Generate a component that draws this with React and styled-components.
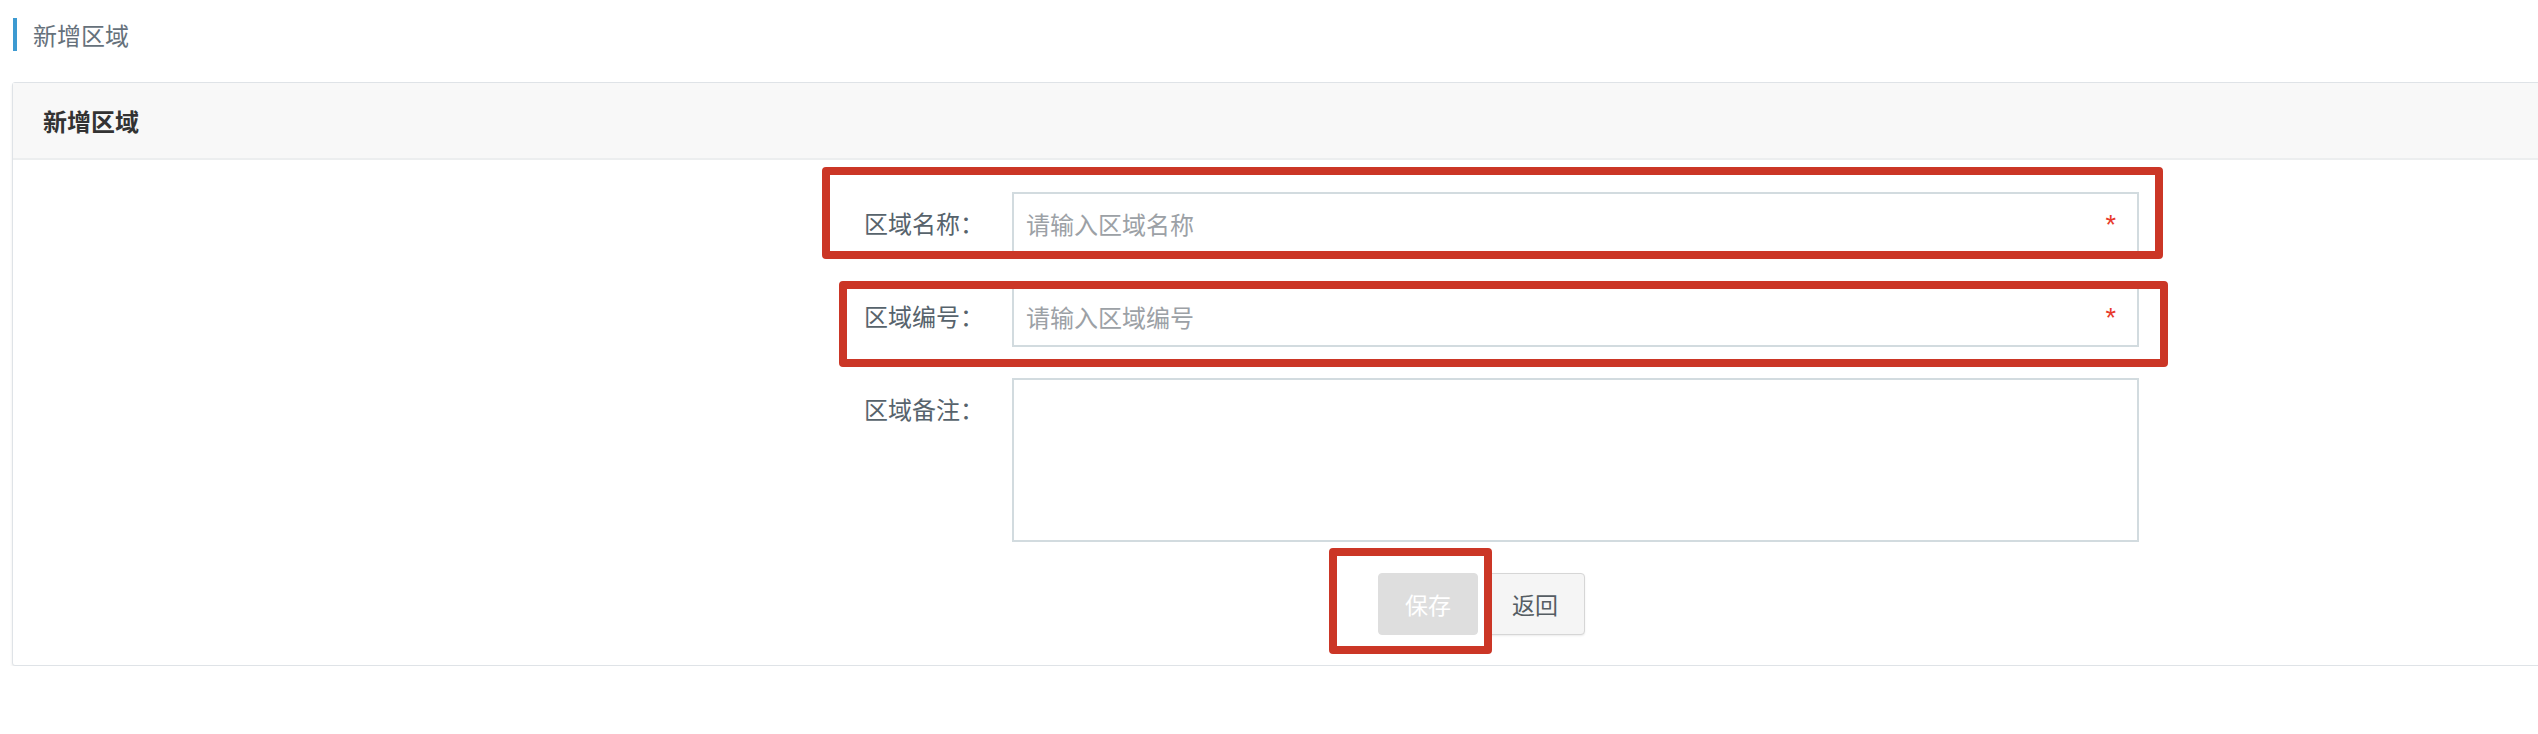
import React from 'react'
import styled, { createGlobalStyle } from 'styled-components'

const GlobalStyle = createGlobalStyle`
    html, body {
        margin: 0;
        padding: 0;
        background: #fff;
        overflow: hidden;
        font-family: "Noto Sans CJK SC", "Noto Sans", sans-serif;
    }
`

const Page = styled.div`
    padding: 18px 0 0 12px;
`

const Crumb = styled.div`
    display: flex;
    align-items: center;
    height: 33px;
    margin-left: 1px;
    border-left: 4px solid #3d9ad1;
    padding-left: 16px;
    font-size: 24px;
    color: #66717b;
`

const Panel = styled.div`
    margin-top: 31px;
    width: 2700px;
    background: #fff;
    border: 1px solid #dfe3e7;
    border-radius: 3px;
    box-shadow: 0 2px 3px rgba(0, 0, 0, 0.08);
`

const PanelHead = styled.div`
    height: 75px;
    display: flex;
    align-items: center;
    padding-left: 30px;
    background: #f8f8f8;
    border-bottom: 2px solid #eceeef;
    font-size: 24px;
    font-weight: bold;
    color: #333;
`

const Form = styled.div`
    padding: 32px 0 30px;
    display: flex;
    flex-direction: column;
    gap: 31px;
`

const Row = styled.div`
    position: relative;
    display: grid;
    grid-template-columns: 999px 1127px;
    align-items: start;
`

const Label = styled.div`
    line-height: 62px;
    text-align: right;
    padding-right: 28px;
    font-size: 24px;
    color: #57636c;
`

const Field = styled.div`
    position: relative;
    display: flex;
`

const Input = styled.input`
    box-sizing: border-box;
    width: 100%;
    height: 62px;
    padding: 0 12px;
    border: 2px solid #d2dbdf;
    border-radius: 0;
    outline: none;
    font-family: inherit;
    font-size: 24px;
    color: #333;
    &::placeholder {
        color: #9ca1a6;
    }
`

const TextArea = styled.textarea`
    box-sizing: border-box;
    width: 100%;
    height: 164px;
    padding: 10px 12px;
    border: 2px solid #d2dbdf;
    border-radius: 0;
    outline: none;
    resize: none;
    font-family: inherit;
    font-size: 24px;
`

const Required = styled.span`
    position: absolute;
    right: 23px;
    top: 20px;
    font-size: 27px;
    line-height: 1;
    color: #e8392c;
    font-family: "Liberation Sans", sans-serif;
`

const ButtonRow = styled.div`
    position: relative;
    display: flex;
    gap: 7px;
    padding-left: 1365px;
`

const Button = styled.button`
    box-sizing: border-box;
    width: 100px;
    height: 62px;
    border-radius: 4px;
    font-family: inherit;
    font-size: 23px;
    cursor: pointer;
    border: 1px solid ${p => (p.$muted ? '#dedede' : '#d6d6d6')};
    background: ${p => (p.$muted ? '#dedede' : '#f5f5f5')};
    color: ${p => (p.$muted ? '#fff' : '#555d63')};
    box-shadow: ${p => (p.$muted ? 'none' : '0 1px 2px rgba(0,0,0,0.08)')};
`

// red annotation frames drawn over the screenshot
const Highlight = styled.div`
    position: absolute;
    box-sizing: border-box;
    top: ${p => p.$top}px;
    left: ${p => p.$left}px;
    width: ${p => p.$w}px;
    height: ${p => p.$h}px;
    border: 8px solid #cb3626;
    border-radius: 4px;
    pointer-events: none;
`

export default function App() {
    return <Page>
        <GlobalStyle />
        <Crumb>新增区域</Crumb>
        <Panel>
            <PanelHead>新增区域</PanelHead>
            <Form>
                <Row>
                    <Label>区域名称：</Label>
                    <Field>
                        <Input placeholder="请输入区域名称" />
                        <Required>*</Required>
                    </Field>
                    <Highlight $top={-25} $left={809} $w={1341} $h={92} />
                </Row>
                <Row>
                    <Label>区域编号：</Label>
                    <Field>
                        <Input placeholder="请输入区域编号" />
                        <Required>*</Required>
                    </Field>
                    <Highlight $top={-4} $left={826} $w={1329} $h={86} />
                </Row>
                <Row>
                    <Label>区域备注：</Label>
                    <Field>
                        <TextArea />
                    </Field>
                </Row>
                <ButtonRow>
                    <Button $muted>保存</Button>
                    <Button>返回</Button>
                    <Highlight $top={-25} $left={1316} $w={163} $h={106} />
                </ButtonRow>
            </Form>
        </Panel>
    </Page>
}
